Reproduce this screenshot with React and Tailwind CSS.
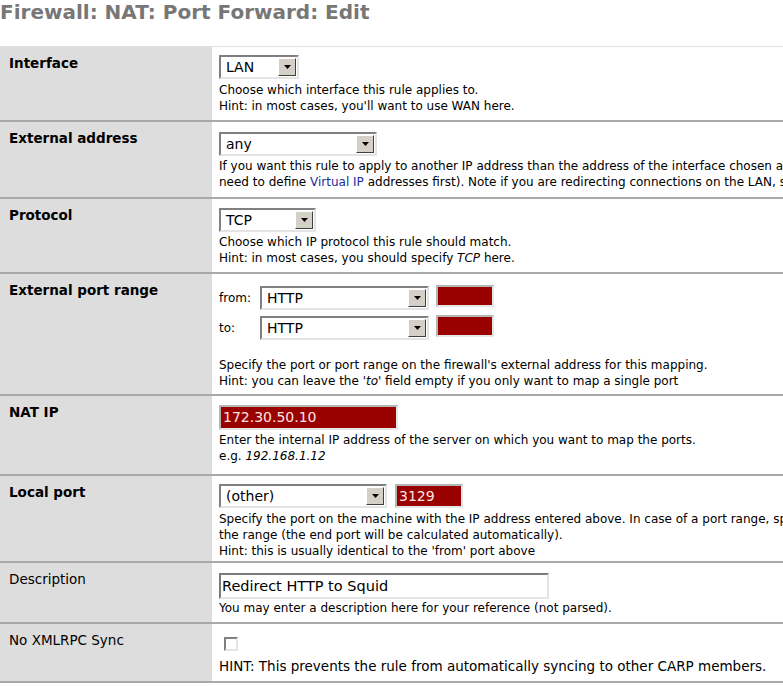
import React from 'react';

const Arrow = () => (
  <div className="h-full w-[18px] bg-[#d4d0c8] border border-t-white border-l-white border-b-[#404040] border-r-[#404040] flex items-center justify-center">
    <svg width="7" height="4" viewBox="0 0 7 4"><path d="M0 0h7L3.5 4z" fill="#000" /></svg>
  </div>
);

const Select = ({ width, value }) => (
  <div
    className={`inline-flex h-[24px] items-stretch bg-white border-2 border-t-[#808080] border-l-[#808080] border-b-[#e4e4e4] border-r-[#e4e4e4] ${width}`}
  >
    <div className="flex-1 pl-[5px] text-[14px] leading-[20px] text-black">{value}</div>
    <div className="p-[1px]"><Arrow /></div>
  </div>
);

const RedBox = ({ width, value, h = 'h-[24px]' }) => (
  <div
    className={`inline-block ${h} ${width} bg-[#990000] border-2 border-t-[#b5b5b5] border-l-[#b5b5b5] border-b-[#e6e6e6] border-r-[#e6e6e6] pl-[2px] text-[14px] leading-[20px] text-[#ffe4e4]`}
  >
    {value}
  </div>
);

const Row = ({ label, bold = true, h, children }) => (
  <div className={`grid grid-cols-[212px_1fr] border-b-2 border-[#a9a9a9] ${h}`}>
    <div
      className={`bg-[#dddddd] pl-[9px] pt-[8px] leading-[16px] text-[13.5px] ${bold ? 'font-bold' : ''} text-black`}
    >
      {label}
    </div>
    <div className="pl-[7px] pt-[8px] whitespace-nowrap text-[12px] leading-[16px] text-black">{children}</div>
  </div>
);

export default function App() {
  return (
    <div className="w-[783px] h-[686px] overflow-hidden bg-white font-['DejaVu_Sans',sans-serif]">
      <h1 className="h-[46px] pt-[1px] text-[20px] leading-[22px] font-bold text-[#777777]">
        Firewall: NAT: Port Forward: Edit
      </h1>

      <div className="border-t border-[#e0e0e0]">
        <Row label="Interface" h="h-[75px]">
          <Select width="w-[80px]" value="LAN" />
          <div className="mt-[3px]">Choose which interface this rule applies to.</div>
          <div>Hint: in most cases, you'll want to use WAN here.</div>
        </Row>

        <Row label="External address" h="h-[77px]">
          <div className="pt-[2px]"><Select width="w-[158px]" value="any" /></div>
          <div className="mt-[2px]">
            If you want this rule to apply to another IP address than the address of the interface chosen above, select it here (you
          </div>
          <div>
            need to define <span className="text-[#1a2b9a]">Virtual IP</span> addresses first). Note if you are redirecting connections on the LAN, select the "any" option.
          </div>
        </Row>

        <Row label="Protocol" h="h-[75px]">
          <div className="pt-[1px]"><Select width="w-[97px]" value="TCP" /></div>
          <div className="mt-[2px]">Choose which IP protocol this rule should match.</div>
          <div>
            Hint: in most cases, you should specify <i>TCP</i> here.
          </div>
        </Row>

        <Row label="External port range" h="h-[122px]">
          <div className="pt-[3px] flex items-center">
            <span className="w-[41px]">from:</span>
            <Select width="w-[169px]" value="HTTP" />
            <span className="ml-[7px]"><RedBox width="w-[58px]" value="" h="h-[22px]" /></span>
          </div>
          <div className="mt-[4px] flex items-center">
            <span className="w-[41px]">to:</span>
            <Select width="w-[169px]" value="HTTP" />
            <span className="ml-[7px]"><RedBox width="w-[58px]" value="" h="h-[22px]" /></span>
          </div>
          <div className="mt-[16px]">Specify the port or port range on the firewall's external address for this mapping.</div>
          <div>
            Hint: you can leave the <i>'to'</i> field empty if you only want to map a single port
          </div>
        </Row>

        <Row label="NAT IP" h="h-[80px]">
          <div className="pt-[1px]"><RedBox width="w-[179px]" value="172.30.50.10" h="h-[25px]" /></div>
          <div className="mt-[2px]">Enter the internal IP address of the server on which you want to map the ports.</div>
          <div>
            e.g. <i>192.168.1.12</i>
          </div>
        </Row>

        <Row label="Local port" h="h-[87px]">
          <div className="flex items-center">
            <Select width="w-[168px]" value="(other)" />
            <span className="ml-[8px]"><RedBox width="w-[68px]" value="3129" /></span>
          </div>
          <div className="mt-[3px]">
            Specify the port on the machine with the IP address entered above. In case of a port range, specify the beginning port of
          </div>
          <div>the range (the end port will be calculated automatically).</div>
          <div>Hint: this is usually identical to the 'from' port above</div>
        </Row>

        <Row label="Description" bold={false} h="h-[61px]">
          <div className="pt-[2px]">
            <div className="h-[26px] w-[330px] bg-white border-2 border-t-[#7a7a7a] border-l-[#7a7a7a] border-b-[#e4e4e4] border-r-[#e4e4e4] pl-[1px] text-[14.5px] leading-[22px]">
              Redirect HTTP to Squid
            </div>
          </div>
          <div className="mt-[1px]">You may enter a description here for your reference (not parsed).</div>
        </Row>

        <Row label="No XMLRPC Sync" bold={false} h="h-[59px]">
          <div className="pt-[5px] pl-[5px]">
            <div className="h-[14px] w-[14px] bg-white border-2 border-t-[#808080] border-l-[#808080] border-b-[#e4e4e4] border-r-[#e4e4e4]" />
          </div>
          <div className="mt-[7px] text-[13.5px]">HINT: This prevents the rule from automatically syncing to other CARP members.</div>
        </Row>
      </div>
    </div>
  );
}
